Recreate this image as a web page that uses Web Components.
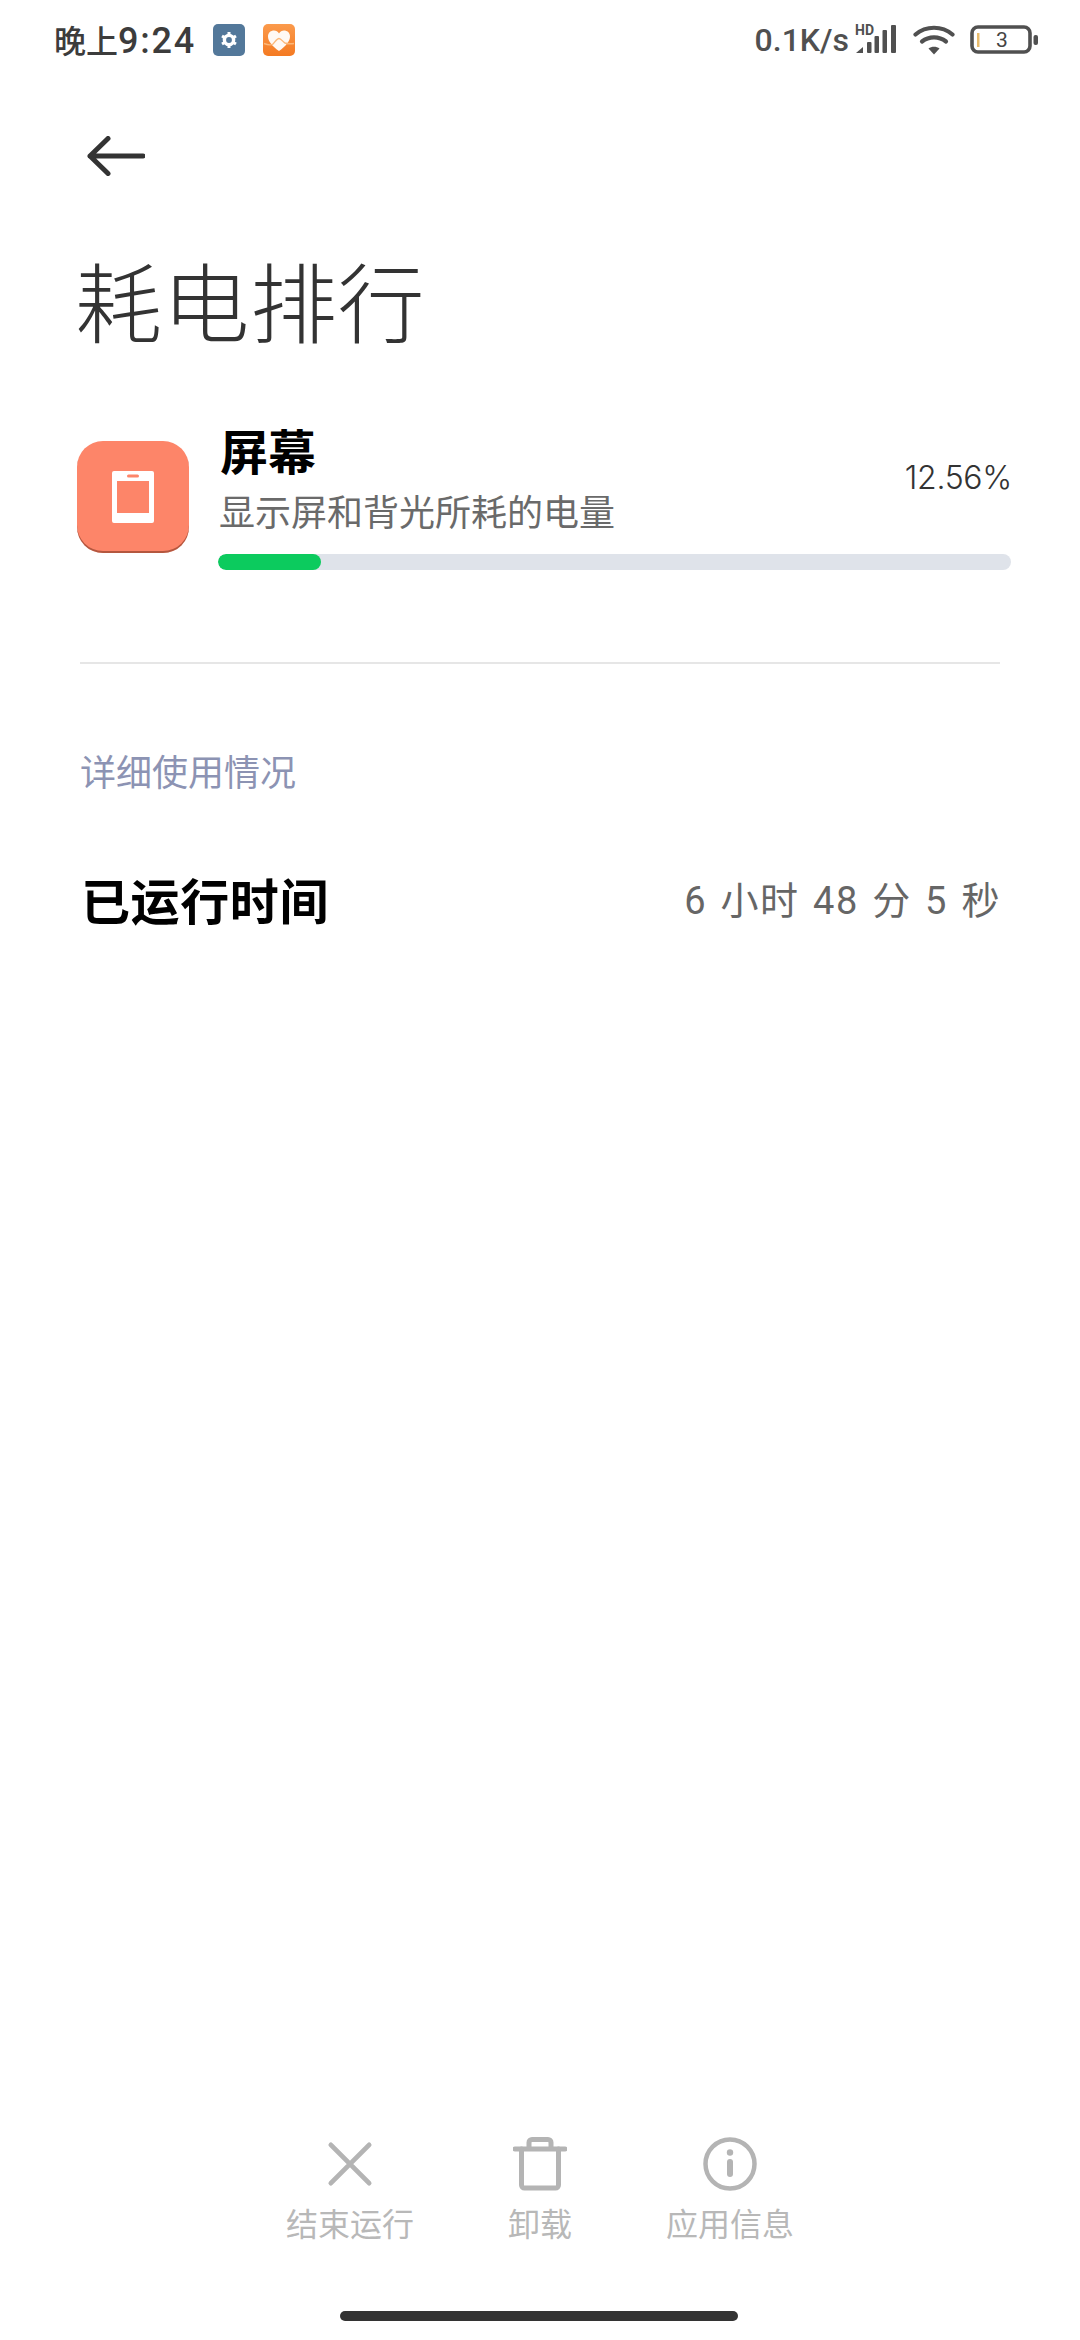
<!DOCTYPE html>
<html lang="zh-CN"><head><meta charset="utf-8"><title>耗电排行</title>
<style>
html,body{margin:0;padding:0;background:#fff}
body{width:1080px;height:2340px;font-family:"Noto Sans CJK SC","Noto Sans",sans-serif;overflow:hidden}
</style></head><body>
<power-page>
<status-bar></status-bar>
<page-header title-text="耗电排行"></page-header>
<usage-row name="屏幕" desc="显示屏和背光所耗的电量" pct="12.56%"></usage-row>
<section-label>详细使用情况</section-label>
<info-row label="已运行时间" value="6 小时 48 分 5 秒"></info-row>
<bottom-bar>
<action-item icon="x">结束运行</action-item>
<action-item icon="trash">卸载</action-item>
<action-item icon="info">应用信息</action-item>
</bottom-bar>
<home-bar></home-bar>
</power-page>
<script>
const def=(name,html)=>customElements.define(name,class extends HTMLElement{
  connectedCallback(){
    if(this.shadowRoot)return;
    const r=this.attachShadow({mode:"open"});
    r.innerHTML=typeof html==="function"?html(this):html;
  }
});
const CJK='"Noto Sans CJK SC","Noto Sans",sans-serif';
def("power-page",`<style>:host{display:flex;flex-direction:column;height:2340px;background:#fff}</style><slot></slot>`);
def("status-bar",`<style>
:host{display:flex;align-items:center;height:80px;padding:0 42px 0 54px;color:#3c3c3c;box-sizing:border-box}
.t{font:500 32px/80px ${CJK};width:141px;white-space:nowrap}
.t b{font:500 36px/80px "Roboto",sans-serif;letter-spacing:1.800px}
svg{display:block;flex:none}
.a,.b{margin-left:18px}
.sp{flex:1}
.n{font:500 32px/80px "Roboto",sans-serif;color:#505050;white-space:nowrap}
.s{margin-left:6px}.w{margin-left:16px}.bat{margin-left:15px}
</style>
<span class="t">晚上<b>9:24</b></span>
<svg class="a" width="32" height="32" viewBox="0 0 32 32"><rect width="32" height="32" rx="5" fill="#53789a"/><circle cx="16" cy="16" r="4.600" fill="none" stroke="#fff" stroke-width="3.400"/><path d="M16 8v3.500M16 20.500V24M9 12l3 1.800M20 18.200l3 1.800M9 20l3-1.800M20 13.800l3-1.800" stroke="#fff" stroke-width="3"/></svg>
<svg class="b" width="32" height="32" viewBox="0 0 32 32"><defs><linearGradient id="g" x1="0" y1="0" x2="0" y2="1"><stop offset="0" stop-color="#fb9a4c"/><stop offset="1" stop-color="#f47a22"/></linearGradient></defs><rect width="32" height="32" rx="5" fill="url(#g)"/><path d="M16 27C9 22 5 17 5 12.500C5 8.500 8 6.500 11 6.500C13 6.500 15 7.500 16 9.500C17 7.500 19 6.500 21 6.500C24 6.500 27 8.500 27 12.500C27 17 23 22 16 27Z" fill="#fff" fill-opacity=".95"/><path d="M1 19.500C5 21 8 21.500 10 20C12 18 14 14.500 16 14.500C18 14.500 20 18 22 19C25 20 28 20 31 19.500" fill="none" stroke="#fbb87a" stroke-width="1.400"/></svg>
<span class="sp"></span>
<span class="n">0.1K/s</span>
<svg class="s" width="42" height="44" viewBox="0 -6 42 44"><text x="0" y="10.500" font-family="Roboto,sans-serif" font-weight="700" font-size="14" fill="#505050">HD</text><g fill="#505050"><path d="M1 29l7-6v6z"/><rect x="12" y="18" width="4.500" height="11" rx="1"/><rect x="19.500" y="12" width="4.500" height="17" rx="1"/><rect x="27.500" y="6" width="4.500" height="23" rx="1"/><rect x="36" y="1" width="5" height="28" rx="1"/></g></svg>
<svg class="w" width="42" height="32" viewBox="0 0 42 32"><g fill="none" stroke="#505050" stroke-width="4.200" stroke-linecap="round"><path d="M2.500 10.500C13 1.500 29 1.500 39.500 10.500"/><path d="M9 17.500C16 12 26 12 33 17.500"/></g><path d="M15.500 24.500C18.500 22.200 23.500 22.200 26.500 24.500L21 30.500Z" fill="#505050"/></svg>
<svg class="bat" width="68" height="32" viewBox="0 0 68 32"><rect x="2" y="3" width="58" height="25" rx="6" fill="none" stroke="#505050" stroke-width="3.600"/><rect x="7" y="9" width="2.500" height="14" fill="#e8bb6c"/><rect x="63.500" y="11" width="4.500" height="10" rx="2" fill="#505050"/><text x="32" y="23" text-anchor="middle" font-family="Roboto,sans-serif" font-size="21" fill="#444">3</text></svg>`);
def("page-header",el=>`<style>
:host{display:block;padding-left:87px;box-sizing:border-box;height:361px}
.back{display:block;margin-top:56px}
h1{margin:71px 0 0 -12px;font:300 87px/104px ${CJK};color:#333;white-space:nowrap;letter-spacing:.5px}
</style>
<svg class="back" width="58" height="40" viewBox="0 0 58 40"><path d="M56 20H3M21 2.500L3 20l18 17.500" fill="none" stroke="#333" stroke-width="5" stroke-linecap="round" stroke-linejoin="round"/></svg>
<h1>${el.getAttribute("title-text")}</h1>`);
def("usage-row",el=>`<style>
:host{display:grid;grid-template-columns:112px 1fr;grid-template-rows:auto auto;column-gap:31px;margin:0 70px 0 77px;height:223px;align-content:start;box-sizing:border-box}
.i{width:112px;height:112px;border-radius:26px;background:#fd8569;box-shadow:inset 0 -2px 0 rgba(120,50,30,.55);display:flex;align-items:center;justify-content:center}
.m{display:grid;grid-template-columns:1fr auto;align-content:start;height:128px}
.n{font:700 48px/52px ${CJK};color:#000;margin-top:-18px}
.d{font:400 36px/44px ${CJK};color:#6a6a6a;margin:13px 0 0 -1px;white-space:nowrap;grid-column:1}
.p{grid-column:2;grid-row:1/3;align-self:center;font:300 32px/40px "Inter","Noto Sans",sans-serif;color:#333;margin:0 -2px 18px 0;letter-spacing:-.3px}
.bar{grid-column:1/3;margin-left:-2px;margin-right:-1px;height:16px;border-radius:8px;background:#dfe3ea;margin-top:22px;overflow:hidden}
.f{height:100%;width:13%;background:#0ccb5e;border-radius:8px}
.hr{grid-column:1/3;height:2px;background:#e6e6e6;margin:93px 10px 0 3px}
</style>
<div class="i"><svg width="42" height="52" viewBox="0 0 42 52"><path fill-rule="evenodd" d="M2 0h38a2 2 0 0 1 2 2v48a2 2 0 0 1-2 2H2a2 2 0 0 1-2-2V2a2 2 0 0 1 2-2zM5 10v32h32V10z" fill="#fff"/><rect x="15" y="3.500" width="12" height="3" rx="1.500" fill="#fd8569"/></svg></div>
<div class="m"><div class="n">${el.getAttribute("name")}</div><div class="d">${el.getAttribute("desc")}</div><div class="p">${el.getAttribute("pct")}</div><div class="bar"><div class="f"></div></div></div>
<div class="hr"></div>`);
def("section-label",`<style>:host{display:block;margin:0 0 0 80px;font:400 36px/44px ${CJK};color:#8c93b3;padding-top:84px;height:132px;box-sizing:border-box}</style><slot></slot>`);
def("info-row",el=>`<style>:host{display:flex;justify-content:space-between;align-items:center;margin:75px 79px 0 81px;height:56px;white-space:nowrap}
.l{font:700 49px/56px ${CJK};color:#000;letter-spacing:.6px}
.v{font:400 38px/56px "Roboto",${CJK};color:#666;word-spacing:2.300px;letter-spacing:1.600px;margin-top:3px}</style>
<span class="l">${el.getAttribute("label")}</span><span class="v">${el.getAttribute("value")}</span>`);
def("bottom-bar",`<style>:host{display:flex;justify-content:center;margin-top:auto;height:145px}</style><slot></slot>`);
const icons={
x:`<path d="M5 5l44 44M49 5L5 49" transform="translate(3.500 3.500) scale(.87)" stroke-width="5.500"/>`,
trash:`<path d="M2 12h50" stroke-width="5"/><path d="M8.500 12v36a3 3 0 0 0 3 3h31a3 3 0 0 0 3-3V12" stroke-width="5"/><path d="M16 10V5.500a3 3 0 0 1 3-3h16a3 3 0 0 1 3 3V10" stroke-width="5"/>`,
info:`<circle cx="27" cy="27" r="24.500" stroke-width="4.500"/><path d="M27 25v12" stroke-width="6"/><circle cx="27" cy="15.500" r="3.200" fill="#b4b4b4" stroke="none"/>`};
def("action-item",el=>`<style>:host{display:flex;flex-direction:column;align-items:center;width:190px}
svg{display:block}
.l{font:400 32px/40px ${CJK};color:#b8b8b8;white-space:nowrap;margin-top:11px}</style>
<svg width="54" height="54" viewBox="0 0 54 54" fill="none" stroke="#b4b4b4" stroke-linecap="round">${icons[el.getAttribute("icon")]}</svg><div class="l"><slot></slot></div>`);
def("home-bar",`<style>:host{display:block;height:58px;padding-top:29px;box-sizing:border-box}
.b{width:398px;height:10px;border-radius:5px;background:#333;margin-left:340px}</style><div class="b"></div>`);
</script>
</body></html>
